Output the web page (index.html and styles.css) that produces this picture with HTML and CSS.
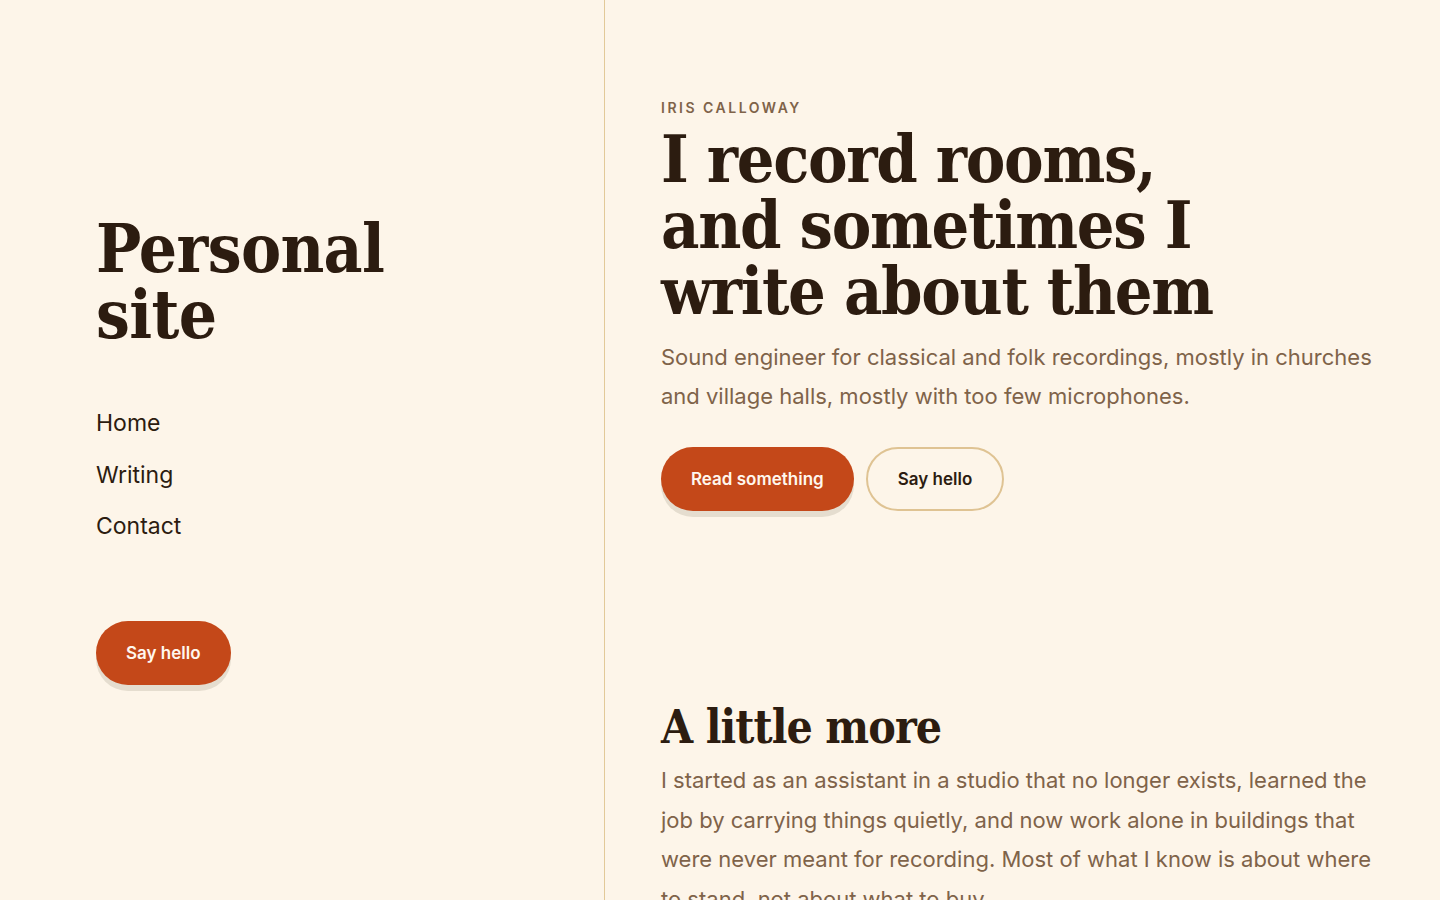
FILE: index.html
```html
<!DOCTYPE html>
<html lang="en">
<head>
<meta charset="utf-8">
<title>Personal site</title>
<link rel="stylesheet" href="styles.css">
</head>
<body>
<div class="page">
  <aside class="sidebar">
    <h1 class="site-title">Personal<br>site</h1>
    <nav class="nav">
      <a href="#" class="nav-link">Home</a>
      <a href="#" class="nav-link">Writing</a>
      <a href="#" class="nav-link">Contact</a>
    </nav>
    <a href="#" class="btn btn-primary">Say hello</a>
  </aside>
  <main class="main">
    <section class="hero">
      <p class="eyebrow">IRIS CALLOWAY</p>
      <h2 class="hero-title">I record rooms, and sometimes I write about them</h2>
      <p class="lead">Sound engineer for classical and folk recordings, mostly in churches and village halls, mostly with too few microphones.</p>
      <div class="actions">
        <a href="#" class="btn btn-primary">Read something</a>
        <a href="#" class="btn btn-outline">Say hello</a>
      </div>
    </section>
    <section class="more">
      <h3 class="more-title">A little more</h3>
      <p class="body-text">I started as an assistant in a studio that no longer exists, learned the job by carrying things quietly, and now work alone in buildings that were never meant for recording. Most of what I know is about where to stand, not about what to buy.</p>
    </section>
  </main>
</div>
</body>
</html>
```

FILE: styles.css
```css
* { box-sizing: border-box; }
html, body { margin: 0; padding: 0; }
body {
  background: #fdf5e9;
  color: #2c1c10;
  font-family: Inter, Roboto, "Liberation Sans", sans-serif;
  height: 900px;
  overflow: hidden;
}
.page {
  display: grid;
  grid-template-columns: 605px 1fr;
  min-height: 900px;
}
.sidebar {
  border-right: 1px solid #e2c998;
  padding: 216px 40px 0 96px;
  display: flex;
  flex-direction: column;
  align-items: flex-start;
}
.site-title {
  font-family: "DejaVu Serif Condensed", "DejaVu Serif", serif;
  font-weight: 700;
  font-size: 67px;
  line-height: 66px;
  letter-spacing: -0.01em;
  margin: 0;
  color: #2c1c10;
}
.nav {
  display: flex;
  flex-direction: column;
  margin-top: 50px;
}
.nav-link {
  font-size: 23px;
  line-height: 51.5px;
  color: #2c1c10;
  text-decoration: none;
}
.btn {
  display: inline-flex;
  align-items: center;
  justify-content: center;
  height: 64px;
  border-radius: 32px;
  font-size: 17px;
  font-weight: 600;
  text-decoration: none;
  padding: 0 30px;
}
.sidebar .btn { margin-top: 68.5px; }
.btn-primary {
  background: #c44819;
  color: #fff7ee;
  box-shadow: 0 6px 0 #e5ddcf;
}
.btn-outline {
  border: 2px solid #dfc393;
  color: #2c1c10;
  background: transparent;
}
.main {
  padding: 96px 56px 0 56px;
}
.eyebrow {
  margin: 0;
  font-size: 14px;
  font-weight: 600;
  letter-spacing: 0.18em;
  color: #7f6349;
  line-height: 24px;
}
.hero-title {
  font-family: "DejaVu Serif Condensed", "DejaVu Serif", serif;
  font-weight: 700;
  font-size: 66px;
  line-height: 66px;
  letter-spacing: -0.02em;
  margin: 6px 0 0;
  max-width: 600px;
  color: #2c1c10;
}
.lead {
  margin: 14px 0 0;
  font-size: 22px;
  line-height: 39px;
  color: #7f6349;
  max-width: 720px;
}
.actions {
  display: flex;
  gap: 12px;
  margin-top: 31px;
}
.more {
  margin-top: 188px;
}
.more-title {
  font-family: "DejaVu Serif Condensed", "DejaVu Serif", serif;
  font-weight: 700;
  font-size: 46px;
  line-height: 56px;
  letter-spacing: -0.02em;
  margin: 0;
  color: #2c1c10;
}
.body-text {
  margin: 6px 0 0;
  font-size: 22px;
  line-height: 39.5px;
  color: #7f6349;
  max-width: 720px;
}
```
